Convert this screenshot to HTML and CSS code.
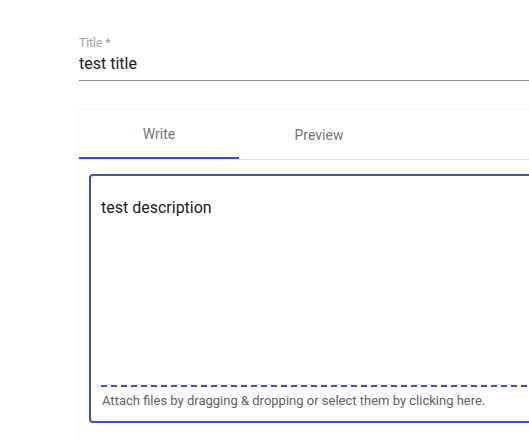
FILE: index.html
```html
<!DOCTYPE html>
<html>
<head>
<meta charset="utf-8">
<link rel="stylesheet" href="styles.css">
</head>
<body>
<div class="page">
  <div class="field">
    <label class="field-label">Title *</label>
    <div class="field-input">test title</div>
  </div>
  <div class="card">
    <div class="tabs">
      <div class="tab active">Write</div>
      <div class="tab">Preview</div>
    </div>
    <div class="editor-wrap">
      <div class="editor">
        <div class="editor-text">test description</div>
        <div class="attach">Attach files by dragging &amp; dropping or select them by clicking here.</div>
      </div>
    </div>
  </div>
</div>
</body>
</html>
```
FILE: styles.css
```css
html, body {
  margin: 0;
  padding: 0;
  overflow: hidden;
  background: #fff;
}
body {
  font-family: Roboto, "Liberation Sans", sans-serif;
  color: #212121;
}
.page {
  width: 900px;
  padding: 36px 0 0 79px;
}
.field {
  display: flex;
  flex-direction: column;
}
.field-label {
  font-size: 12px;
  line-height: 14px;
  color: #9e9e9e;
}
.field-input {
  font-size: 16px;
  line-height: 19px;
  padding: 4px 0 7px;
  color: #212121;
  border-bottom: 1px solid #8c8c8c;
}
.card {
  margin-top: 29px;
  height: 400px;
  box-shadow: 0 0 2px rgba(0,0,0,0.12);
  border-radius: 2px;
}
.tabs {
  display: flex;
  height: 49px;
  border-bottom: 1px solid #e0e0e0;
}
.tab {
  width: 160px;
  display: flex;
  align-items: center;
  justify-content: center;
  font-size: 14px;
  color: #757575;
  box-sizing: border-box;
}
.tab.active {
  border-bottom: 2px solid #3f51b5;
}
.editor-wrap {
  padding: 14px 0 0 10px;
}
.editor {
  height: 249px;
  box-sizing: border-box;
  border: 2px solid #3f51b5;
  border-radius: 4px;
  padding: 0 0 0 10px;
  display: flex;
  flex-direction: column;
}
.editor-text {
  flex: 1;
  font-size: 16px;
  line-height: 19px;
  padding-top: 22px;
  color: #212121;
}
.attach {
  border-top: 2px dashed #3f51b5;
  font-size: 13px;
  line-height: 15px;
  color: #616161;
  padding: 6px 0 13px 1px;
}
```
